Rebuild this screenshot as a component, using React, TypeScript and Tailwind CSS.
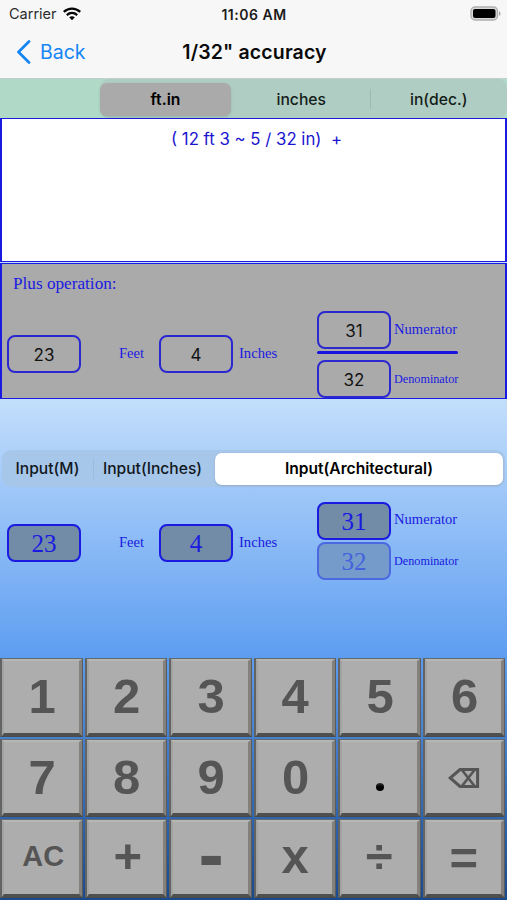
import type { ReactNode } from "react";

const serif = "font-['Liberation_Serif',serif] text-[#1a1ae0]";

function StatusBar() {
  return (
    <div className="flex h-[28px] items-center justify-between pl-[9px] pr-[6px] text-[14px]">
      <div className="flex w-[100px] items-center gap-[6px]">
        <span className="text-[14.5px] text-[#2c2c2c]">Carrier</span>
        <svg width="18" height="14" viewBox="0 0 18 14" fill="none" stroke="#050505">
          <path d="M0.8 4.9C5.5 0.5 12.5 0.5 17.2 4.9" strokeWidth="2.4" />
          <path d="M3.8 8.1C6.9 5.3 11.1 5.3 14.2 8.1" strokeWidth="2.3" />
          <path d="M9 13.2L6.2 10.3C7.8 8.9 10.2 8.9 11.8 10.3Z" fill="#050505" stroke="none" />
        </svg>
      </div>
      <span className="pr-[2px] font-semibold tracking-[0.5px] text-[#1c1c1c]">11:06 AM</span>
      <div className="flex w-[100px] justify-end pb-[2px]">
        <svg width="31" height="15" viewBox="0 0 31 15">
          <rect x="1" y="1" width="26.5" height="13" rx="4" fill="#d9d9d9" stroke="#b0b0b0" strokeWidth="1.4" />
          <rect x="3" y="3" width="22.5" height="9" rx="2" fill="#000" />
          <path d="M29 5.2C31 6 31 9 29 9.8Z" fill="#a6a6a6" />
        </svg>
      </div>
    </div>
  );
}

function NavBar() {
  return (
    <div className="grid h-[51px] grid-cols-[1fr_auto_1fr] items-center border-b border-[#c3cfcb] pb-[2px]">
      <div className="flex items-center gap-[9px] pl-[16px] text-[#1485f5]">
        <svg width="15" height="24" viewBox="0 0 15 24" fill="none" stroke="currentColor" strokeWidth="2.7">
          <path d="M13 1.5L2.5 12L13 22.5" strokeLinecap="round" strokeLinejoin="round" />
        </svg>
        <span className="text-[19.5px] leading-6">Back</span>
      </div>
      <h1 className="pl-[2px] text-[19.5px] font-semibold leading-6 tracking-[0.15px] text-[#0a0a0a]">
        1/32" accuracy
      </h1>
      <div />
    </div>
  );
}

function Field({ value, className }: { value: string; className: string }) {
  return (
    <div className={`flex w-[74px] shrink-0 items-center justify-center rounded-[8px] border-2 ${className}`}>
      {value}
    </div>
  );
}

function ResultPanel() {
  const field = "h-[38px] border-[#2b28cf] pt-[4px] text-[17px] text-[#141414]";
  return (
    <div className="h-[137px] border-x-2 border-y border-[#1a1ae0] bg-[#aaaaaa]">
      <div className={`h-[47px] pl-[11px] pt-[9px] text-[17.2px] leading-[22px] ${serif}`}>Plus operation:</div>
      <div className="flex pl-[5px]">
        <div className="mt-[24px] flex h-[38px] items-center">
          <Field value="23" className={field} />
          <span className={`w-[78px] pl-[38px] text-[14.6px] ${serif}`}>Feet</span>
          <Field value="4" className={field} />
          <span className={`w-[84px] pl-[6px] text-[14.6px] ${serif}`}>Inches</span>
        </div>
        <div className="w-[141px]">
          <div className="flex items-center gap-[3px]">
            <Field value="31" className={field} />
            <span className={`pt-px text-[14.6px] ${serif}`}>Numerator</span>
          </div>
          <div className="mb-[6px] mt-[2px] h-[3px] rounded-full bg-[#1a14e0]" />
          <div className="flex items-center gap-[3px]">
            <Field value="32" className={field} />
            <span className={`text-[12.2px] ${serif}`}>Denominator</span>
          </div>
        </div>
      </div>
    </div>
  );
}

function InputPanel() {
  const field =
    "h-[38px] border-[#1a1ae0] bg-[#728ba6] font-['Liberation_Serif',serif] text-[25px] text-[#1a1ae0]";
  return (
    <div className="flex pl-[7px] pt-[14px]">
      <div className="mt-[22px] flex h-[38px] items-center">
        <Field value="23" className={field} />
        <span className={`w-[78px] pl-[38px] text-[14.6px] ${serif}`}>Feet</span>
        <Field value="4" className={field} />
        <span className={`w-[84px] pl-[6px] text-[14.6px] ${serif}`}>Inches</span>
      </div>
      <div className="w-[145px]">
        <div className="flex items-center gap-[3px]">
          <Field value="31" className={field} />
          <span className={`pb-[2px] text-[14.6px] ${serif}`}>Numerator</span>
        </div>
        <div className="mt-[2px] flex items-center gap-[3px]">
          <Field
            value="32"
            className="h-[38px] border-[#4c68e0] bg-[#749bca] font-['Liberation_Serif',serif] text-[25px] text-[#4562de]"
          />
          <span className={`text-[12.2px] ${serif}`}>Denominator</span>
        </div>
      </div>
    </div>
  );
}

const backspace = (
  <svg width="32" height="22" viewBox="0 0 32 22" fill="none" stroke="#555">
    <path d="M2.2 11L12 2.6H29.6V19.4H12Z" strokeWidth="3" />
    <path d="M14 3L26.5 19M26.5 3L14 19" strokeWidth="2.6" />
  </svg>
);

const dot = <span className="h-[8px] w-[8px] rounded-full bg-linear-to-b from-[#3a3a3a] to-black to-60%" />;

const keys: { label: ReactNode; style: string }[] = [
  { label: "1", style: "text-[49px] pl-[2px]" },
  { label: "2", style: "text-[49px] pl-[2px]" },
  { label: "3", style: "text-[49px] pl-[2px]" },
  { label: "4", style: "text-[49px] pl-px" },
  { label: "5", style: "text-[49px] pl-[2px]" },
  { label: "6", style: "text-[49px] pl-[2px]" },
  { label: "7", style: "text-[49px] pl-[2px]" },
  { label: "8", style: "text-[49px] pl-[2px]" },
  { label: "9", style: "text-[49px] pl-[2px]" },
  { label: "0", style: "text-[49px] pl-[2px]" },
  { label: dot, style: "pt-[19px] pl-[2px]" },
  { label: backspace, style: "pt-[2px]" },
  { label: "AC", style: "text-[29px] pb-[4px] pl-[4px]" },
  { label: "+", style: "text-[49px] pb-[4px] pl-[4px]" },
  { label: "-", style: "text-[76px] pb-[9px] pl-[2px]" },
  { label: "x", style: "text-[49px] pb-[4px] pl-px" },
  { label: "÷", style: "text-[49px] pb-[3px]" },
  { label: "=", style: "text-[49px]" },
];

function Keypad() {
  return (
    <div className="grid h-[242px] grid-cols-6 grid-rows-3 gap-[2px] pb-[2px] pr-[2px] font-['Liberation_Sans',sans-serif] font-bold leading-none text-[#555555]">
      {keys.map((key, i) => (
        <div
          key={i}
          className="min-h-0 min-w-0 border border-l-2 border-b-[#484b49] border-l-[#626364] border-r-[#5a5c5f] border-t-[#626a74] bg-[#4c4f4c]"
        >
          <div
            className={`flex h-full items-center justify-center border-b-[3px] border-l-2 border-r-[3px] border-t-2 border-b-[#4d504c] border-l-[#a2a2a1] border-r-[#84817d] border-t-[#b6b6b5] bg-[#adadad] ${key.style}`}
          >
            {key.label}
          </div>
        </div>
      ))}
    </div>
  );
}

export default function App() {
  return (
    <div className="flex h-[900px] w-[507px] flex-col overflow-hidden bg-linear-to-b from-[#c4dffb] from-[44%] via-[#5d9df0] via-[73%] to-[#194a8c] font-['Inter',sans-serif]">
      <div className="bg-[#f7f7f7]">
        <StatusBar />
        <NavBar />
      </div>

      <div className="flex h-[39px] items-center bg-[#b0d9c7] pl-[100px] text-[15.7px] font-medium text-[#151d1a]">
        <div className="flex h-full flex-1 items-center rounded-[9px] bg-[#afcdc2] pt-[2px]">
          <div className="flex h-[33px] w-[131px] items-center justify-center rounded-[7px] bg-[#aaaaaa] font-semibold text-black shadow-sm">
            ft.in
          </div>
          <div className="flex-1 pl-[2px] text-center">inches</div>
          <div className="h-[20px] w-px bg-[#9dbbb0]" />
          <div className="flex-1 text-center">in(dec.)</div>
        </div>
      </div>

      <div className="mb-px h-[144px] border-x-2 border-y border-[#1a1ae0] bg-white pl-[6px] pt-[9px] text-center text-[16.8px] leading-[22px] whitespace-pre text-[#1a14d0]">
        {"( 12 ft 3 ~ 5 / 32 in)  +"}
      </div>
      <ResultPanel />

      <div className="mx-[2px] mt-[51px] flex h-[37px] items-center rounded-[9px] bg-[#a6c6ea] text-[15.6px] font-medium text-[#111820]">
        <div className="w-[91px] text-center">Input(M)</div>
        <div className="h-[20px] w-px bg-[#9abbe0]" />
        <div className="w-[121px] pr-[4px] text-center">Input(Inches)</div>
        <div className="mr-[2px] flex h-[32px] flex-1 items-center justify-center rounded-[7px] bg-white font-semibold text-black shadow-sm">
          Input(Architectural)
        </div>
      </div>

      <div className="h-[171px] pt-px">
        <InputPanel />
      </div>
      <Keypad />
    </div>
  );
}
